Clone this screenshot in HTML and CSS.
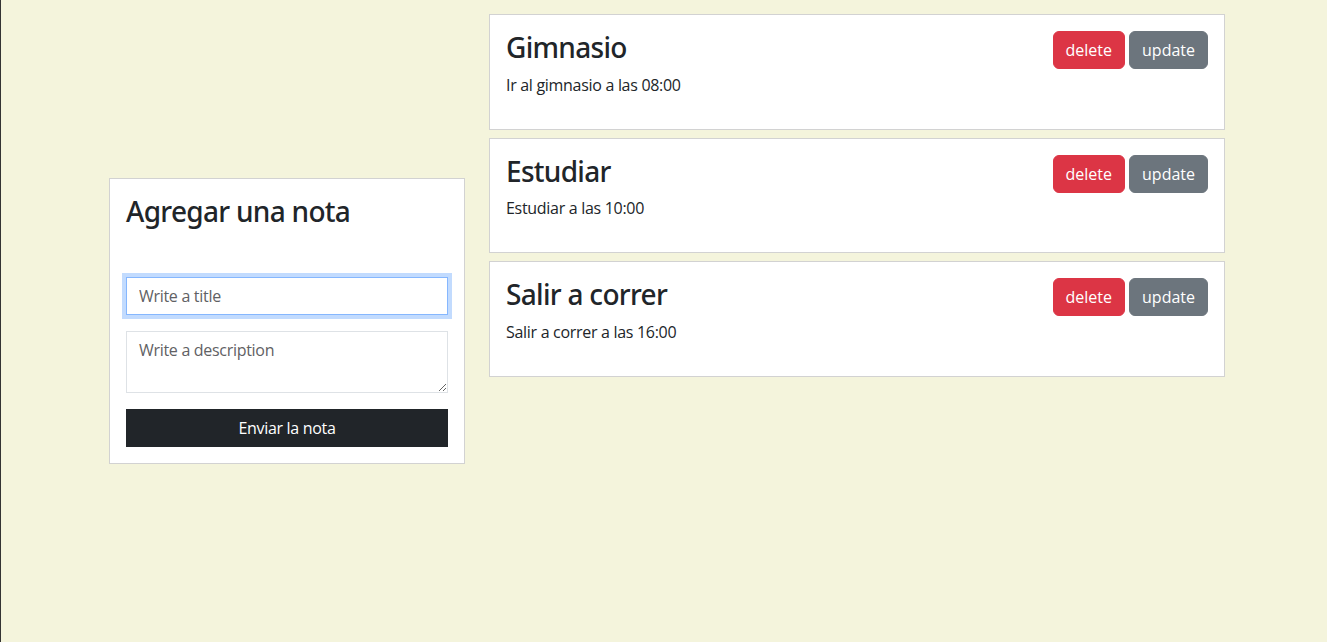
FILE: index.html
```html
<!DOCTYPE html>
<html lang="es">
<head>
<meta charset="utf-8">
<title>Notas</title>
<link rel="stylesheet" href="styles.css">
</head>
<body>
<div class="container">
  <div class="col-form">
    <div class="card">
      <div class="card-body">
        <h3 class="title">Agregar una nota</h3>
        <form class="form">
          <input class="control focused" type="text" placeholder="Write a title">
          <textarea class="control" rows="2" placeholder="Write a description"></textarea>
          <button class="btn btn-dark" type="button">Enviar la nota</button>
        </form>
      </div>
    </div>
  </div>
  <div class="col-notes">
    <div class="card note">
      <div class="card-body">
        <div class="note-head">
          <h3 class="title">Gimnasio</h3>
          <div class="actions">
            <button class="btn btn-danger" type="button">delete</button>
            <button class="btn btn-secondary" type="button">update</button>
          </div>
        </div>
        <p class="desc">Ir al gimnasio a las 08:00</p>
      </div>
    </div>
    <div class="card note">
      <div class="card-body">
        <div class="note-head">
          <h3 class="title">Estudiar</h3>
          <div class="actions">
            <button class="btn btn-danger" type="button">delete</button>
            <button class="btn btn-secondary" type="button">update</button>
          </div>
        </div>
        <p class="desc">Estudiar a las 10:00</p>
      </div>
    </div>
    <div class="card note">
      <div class="card-body">
        <div class="note-head">
          <h3 class="title">Salir a correr</h3>
          <div class="actions">
            <button class="btn btn-danger" type="button">delete</button>
            <button class="btn btn-secondary" type="button">update</button>
          </div>
        </div>
        <p class="desc">Salir a correr a las 16:00</p>
      </div>
    </div>
  </div>
</div>
</body>
</html>
```
FILE: styles.css
```css
* { box-sizing: border-box; }
html, body { height: 100%; }
body {
  margin: 0;
  background: #f4f4dc;
  border-left: 1px solid #333;
  color: #212529;
  font-family: "Open Sans", "Noto Sans", sans-serif;
  font-size: 16px;
  line-height: 24px;
  letter-spacing: -0.3px;
}
.container {
  display: flex;
  gap: 24px;
  width: 1116px;
  margin-left: 108px;
  height: 642px;
}
.col-form {
  width: 356px;
  flex: none;
  align-self: center;
}
.col-notes {
  width: 736px;
  flex: none;
  padding-top: 14px;
}
.card {
  background: #fff;
  border: 1px solid rgba(0, 0, 0, 0.175);
}
.card-body { padding: 16px; }
.title {
  margin: 0 0 8px;
  font-family: "Noto Sans", "Open Sans", sans-serif;
  font-size: 28px;
  line-height: 33.6px;
  font-weight: 500;
  letter-spacing: -0.7px;
}
.form {
  display: flex;
  flex-direction: column;
  gap: 16px;
  margin-top: 48px;
}
.control {
  display: block;
  width: 100%;
  padding: 6px 12px;
  font: inherit;
  letter-spacing: inherit;
  color: #212529;
  background: #fff;
  border: 1px solid #dee2e6;
  border-radius: 0;
  outline: none;
}
.control::placeholder { color: #5f6164; }
input.control { height: 38px; }
textarea.control { height: 62px; resize: vertical; }
.control.focused {
  border-color: #86b7fe;
  box-shadow: 0 0 0 4px rgba(13, 110, 253, 0.25);
}
.btn {
  font: inherit;
  letter-spacing: inherit;
  padding: 6px 12px;
  line-height: 24px;
  border: 1px solid transparent;
  color: #fff;
  cursor: pointer;
}
.btn-dark {
  width: 100%;
  background: #212529;
  border-color: #212529;
  border-radius: 0;
}
.note { margin-bottom: 8px; }
.note-head {
  display: flex;
  justify-content: space-between;
  align-items: flex-start;
}
.actions { display: flex; gap: 4px; }
.btn-danger,
.btn-secondary { border-radius: 6px; letter-spacing: 0; }
.btn-danger { background: #dc3545; border-color: #dc3545; }
.btn-secondary { background: #6c757d; border-color: #6c757d; }
.desc { margin: 0 0 16px; }
```
